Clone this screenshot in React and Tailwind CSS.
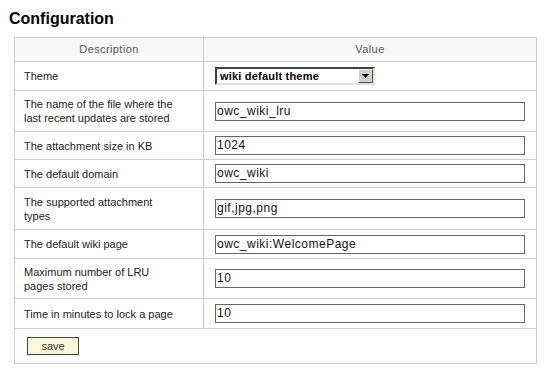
import React from "react";

const rows = [
  { label: "The name of the file where the last recent updates are stored", value: "owc_wiki_lru", h: "h-[41px]" },
  { label: "The attachment size in KB", value: "1024", h: "h-[28px]" },
  { label: "The default domain", value: "owc_wiki", h: "h-[28px]" },
  { label: "The supported attachment types", value: "gif,jpg,png", h: "h-[42px]" },
  { label: "The default wiki page", value: "owc_wiki:WelcomePage", h: "h-[29px]" },
  { label: "Maximum number of LRU pages stored", value: "10", h: "h-[40px]" },
  { label: "Time in minutes to lock a page", value: "10", h: "h-[30px]" },
];

export default function App() {
  return (
    <div className="w-[545px] h-[371px] bg-white font-['Liberation_Sans',Arial,sans-serif] text-[11px] text-[#222]">
      <h1 className="pl-[9px] pt-[9px] h-[37px] text-[16px] font-bold leading-[20px] text-black">Configuration</h1>
      <table className="ml-[14px] w-[523px] border-collapse border border-[#cccccc]">
        <thead>
          <tr className="h-[24px] bg-[#f8f8f8]">
            <th className="w-[189px] border border-[#cccccc] font-normal text-[#555] text-center p-0 tracking-[0.4px]">Description</th>
            <th className="border border-[#cccccc] font-normal text-[#555] text-center p-0 tracking-[0.4px]">Value</th>
          </tr>
        </thead>
        <tbody>
          <tr className="h-[29px]">
            <td className="border border-[#cccccc] pl-[9px] pr-[25px] leading-[14px]">Theme</td>
            <td className="border border-[#cccccc] pl-[11px]">
              <div className="flex items-center w-[160px] h-[18px] border-2 border-[#e0e0e0] border-t-[#404040] border-l-[#404040] bg-white">
                <span className="flex-1 pl-[3px] font-bold text-black text-[11px] leading-[14px] tracking-[0.2px]">wiki default theme</span>
                <span className="w-[15px] h-[14px] bg-[#d4d0c8] border border-t-white border-l-white border-r-[#555] border-b-[#555] flex items-center justify-center">
                  <svg width="7" height="4" viewBox="0 0 7 4"><path d="M0 0h7L3.5 4z" fill="#000" /></svg>
                </span>
              </div>
            </td>
          </tr>
          {rows.map((r) => (
            <tr key={r.label} className={r.h}>
              <td className="border border-[#cccccc] pl-[9px] pr-[25px] leading-[14px]">{r.label}</td>
              <td className="border border-[#cccccc] pl-[11px]">
                <div className="w-[310px] h-[19px] border border-[#666] bg-white pl-[1px] text-[#111] text-[12px] tracking-[0.5px] leading-[17px]">{r.value}</div>
              </td>
            </tr>
          ))}
          <tr className="h-[35px]">
            <td colSpan={2} className="border border-[#cccccc] pl-[12px]">
              <button className="w-[52px] h-[18px] bg-[#fff6dc] border border-[#444] text-[#333] text-[11px] leading-[14px]">save</button>
            </td>
          </tr>
        </tbody>
      </table>
    </div>
  );
}
